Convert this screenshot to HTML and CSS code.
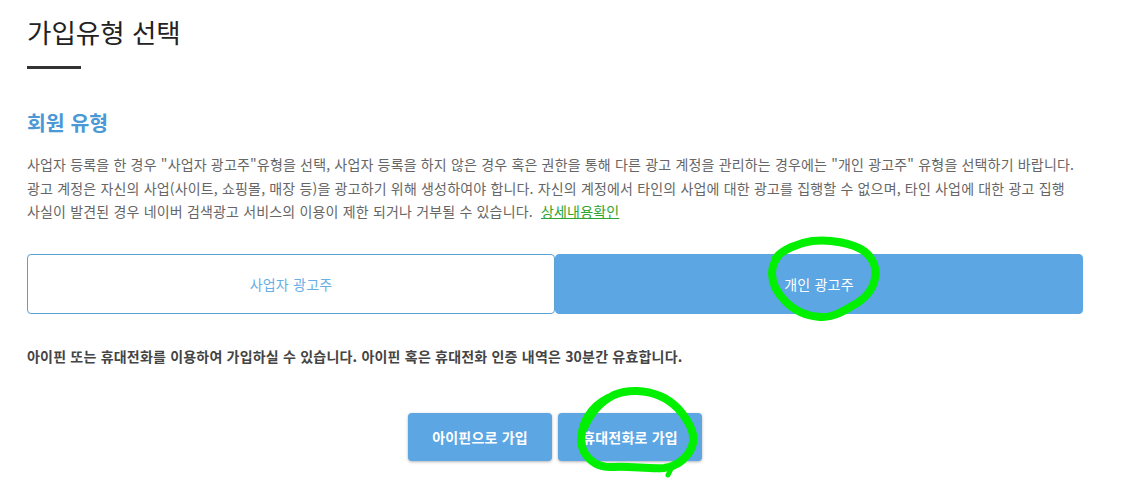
FILE: index.html
```html
<!DOCTYPE html>
<html lang="ko">
<head>
<meta charset="utf-8">
<title>가입유형 선택</title>
<link rel="stylesheet" href="styles.css">
</head>
<body>
<main class="page">
  <h1 class="title">가입유형 선택</h1>
  <div class="rule"></div>
  <h2 class="section">회원 유형</h2>
  <p class="desc">사업자 등록을 한 경우 "사업자 광고주"유형을 선택, 사업자 등록을 하지 않은 경우 혹은 권한을 통해 다른 광고 계정을 관리하는 경우에는 "개인 광고주" 유형을 선택하기 바랍니다.<br>광고 계정은 자신의 사업(사이트, 쇼핑몰, 매장 등)을 광고하기 위해 생성하여야 합니다. 자신의 계정에서 타인의 사업에 대한 광고를 집행할 수 없으며, 타인 사업에 대한 광고 집행<br>사실이 발견된 경우 네이버 검색광고 서비스의 이용이 제한 되거나 거부될 수 있습니다. &nbsp;<a class="link" href="#">상세내용확인</a></p>
  <div class="tabs">
    <div class="tab">사업자 광고주</div>
    <div class="tab tab-active">개인 광고주</div>
  </div>
  <p class="notice">아이핀 또는 휴대전화를 이용하여 가입하실 수 있습니다. 아이핀 혹은 휴대전화 인증 내역은 30분간 유효합니다.</p>
  <div class="actions">
    <a class="btn" href="#">아이핀으로 가입</a>
    <a class="btn" href="#">휴대전화로 가입</a>
  </div>
</main>
<svg class="marks" width="1124" height="491" viewBox="0 0 1124 491" aria-hidden="true">
  <path d="M776 258C782 250 798 243 812 241C830 239 852 243 864 251C873 258 877 268 875 278C873 290 864 300 852 306C842 312 832 318 820 317C806 316 794 310 786 302C778 294 772 284 772 274C772 266 774 261 780 254"/>
  <path d="M584 428C590 414 600 402 614 395C628 389 646 390 660 396C674 402 684 414 690 426C695 436 694 446 688 454C682 462 674 467 664 468C648 469 630 466 614 467C600 468 590 462 584 452C579 442 581 428 588 416C593 408 600 402 608 398"/>
  <path class="tail" d="M652 469L672 467L668 475"/>
</svg>
</body>
</html>
```

FILE: styles.css
```css
* {
  box-sizing: border-box;
}

html,
body {
  margin: 0;
  height: 100%;
  overflow: hidden;
  background: #fff;
}

body {
  position: relative;
  font-family: "Noto Sans CJK KR", "Noto Sans", sans-serif;
  color: #555;
}

.page {
  display: flex;
  flex-direction: column;
  width: 1124px;
  padding: 0 41px 0 27px;
}

.title {
  margin: 14px 0 0;
  font-size: 26.5px;
  font-weight: 400;
  line-height: 36px;
  color: #222;
}

.rule {
  width: 54px;
  height: 3px;
  margin-top: 16px;
  background: #333;
}

.section {
  margin: 39px 0 0;
  font-size: 20.5px;
  font-weight: 700;
  line-height: 28px;
  color: #4a98d6;
}

.desc {
  margin: 17px 0 0;
  font-size: 14px;
  letter-spacing: 0.17px;
  line-height: 23.5px;
  color: #666;
  white-space: nowrap;
}

.link {
  color: #2fa52f;
  text-decoration: underline;
}

.tabs {
  display: grid;
  grid-template-columns: 528px 528px;
  height: 60px;
  margin-top: 30px;
}

.tab {
  display: flex;
  align-items: center;
  justify-content: center;
  border: 1px solid #5ca2d0;
  border-radius: 4px;
  font-size: 14px;
  letter-spacing: 0.2px;
  color: #6aaee6;
}

.tab-active {
  border-color: #5ca6e4;
  background: #5ca6e4;
  color: #fff;
}

.notice {
  margin: 32px 0 0;
  font-size: 14px;
  letter-spacing: 0.2px;
  font-weight: 700;
  line-height: 20px;
  color: #444;
  white-space: nowrap;
}

.actions {
  display: flex;
  justify-content: center;
  gap: 6px;
  width: 1056px;
  margin-top: 47px;
}

.btn {
  display: flex;
  align-items: center;
  justify-content: center;
  width: 144px;
  height: 48px;
  border-radius: 4px;
  background: #5ca6e4;
  box-shadow: 0 1px 3px rgba(0, 0, 0, 0.3);
  font-size: 14px;
  letter-spacing: 0.2px;
  font-weight: 700;
  color: #fff;
  text-decoration: none;
}

.marks {
  position: absolute;
  top: 0;
  left: 0;
  pointer-events: none;
}

.marks path {
  fill: none;
  stroke: #00f000;
  stroke-width: 8;
  stroke-linecap: round;
  stroke-linejoin: round;
}

.marks .tail {
  stroke-width: 5;
}
```
